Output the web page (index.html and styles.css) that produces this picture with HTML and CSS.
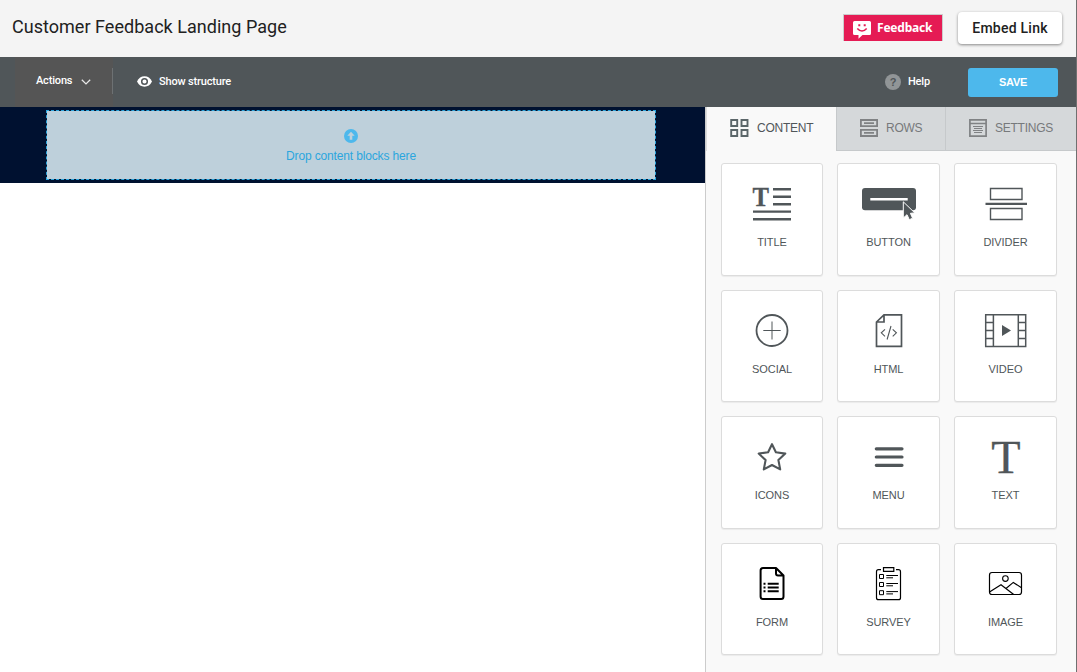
FILE: index.html
```html
<!DOCTYPE html>
<html lang="en">
<head>
<meta charset="utf-8">
<title>Customer Feedback Landing Page</title>
<link rel="stylesheet" href="styles.css">
</head>
<body>
<div class="app">
  <header class="header">
    <h1 class="page-title">Customer Feedback Landing Page</h1>
    <button class="feedback">
      <svg width="18" height="18" viewBox="0 0 18 18"><path d="M1.500 0h15Q18 0 18 1.500v11Q18 14 16.500 14H9.500L5.500 17.800V14h-4Q0 14 0 12.500v-11Q0 0 1.500 0z" fill="#fff"/><path d="M5.300 3.200h2v2h-2zM10.700 3.200h2v2h-2z" fill="#e51b54"/><path d="M4.300 7.500Q9 12.600 13.700 7.500" fill="none" stroke="#e51b54" stroke-width="1.600"/></svg>
      <span>Feedback</span>
    </button>
    <button class="embed">Embed Link</button>
  </header>
  <nav class="toolbar">
    <div class="actions"><span>Actions</span>
      <svg width="10" height="6" viewBox="0 0 10 6"><path d="M.8.8L5 4.900 9.200.8" fill="none" stroke="#e8e8e8" stroke-width="1.300"/></svg>
    </div>
    <div class="structure">
      <svg width="15" height="11" viewBox="0 0 15 11"><path d="M0 5.500Q2.500.3 7.500.3T15 5.500Q12.500 10.700 7.500 10.700T0 5.500z" fill="#fff"/><circle cx="7.500" cy="5.500" r="2.800" fill="#fff" stroke="#505659" stroke-width="1.500"/></svg>
      <span>Show structure</span>
    </div>
    <div class="help"><span class="help-mark">?</span><span>Help</span></div>
    <button class="save">SAVE</button>
  </nav>
  <div class="workspace">
    <main class="canvas">
      <section class="stage-row">
        <div class="dropzone">
          <svg width="14" height="14" viewBox="0 0 14 14"><circle cx="7" cy="7" r="7" fill="#4db8ec"/><path d="M7 2.800l3.700 3.900H8.300v4H5.700v-4H3.300z" fill="#bed0db"/></svg>
          <span>Drop content blocks here</span>
        </div>
      </section>
    </main>
    <aside class="panel">
      <div class="tabs">
        <div class="tab tab-content">
          <svg width="19" height="18" viewBox="0 0 19 18" fill="none" stroke="#5b6669" stroke-width="1.900"><path d="M1.200 1h6v6h-6zM11.500 1h6v6h-6zM1.200 11h6v6h-6zM11.500 11h6v6h-6z"/></svg>
          <span>CONTENT</span>
        </div>
        <div class="tab tab-rows">
          <svg width="18" height="18" viewBox="0 0 18 18" fill="none" stroke="#808284" stroke-width="1.800"><path d="M.9 1h16.200v6.200H.9zM.9 10.800h16.200V17H.9zM4 4.100h10M4 13.900h10"/></svg>
          <span>ROWS</span>
        </div>
        <div class="tab tab-settings">
          <svg width="18" height="18" viewBox="0 0 18 18" fill="none" stroke="#808284"><path d="M.9.9h16.200v16.200H.9zM1 4.500h16" stroke-width="1.700"/><path d="M4 7.500h10M5 9.500h8M4 11.500h10M5 13.500h8"/></svg>
          <span>SETTINGS</span>
        </div>
      </div>
      <div class="tiles">
        <div class="tile"><svg class="icon" viewBox="0 0 60 40"><text class="serif-t" x="10.500" y="23" font-size="27" font-weight="bold" textLength="16.500" lengthAdjust="spacingAndGlyphs">T</text><path d="M31 6.200h18M31 13.800h18M31 21.200h18M11 28.600h38M11 36.200h38" stroke-width="2.400"/></svg><span>TITLE</span></div>
        <div class="tile"><svg class="icon" viewBox="0 0 60 40"><rect x="4" y="5" width="54" height="22.300" rx="3" fill="#505659" stroke="none"/><path d="M12.300 16.300h37.400" stroke="#fff" stroke-width="2.400"/><path d="M45.300 18.800V35l3.700-3.300 2.300 5 3.300-1.500-2.200-4.900 4.400-.4z" fill="#505659" stroke="#fff" stroke-width="1"/></svg><span>BUTTON</span></div>
        <div class="tile"><svg class="icon" viewBox="0 0 60 40"><path d="M15.500 5.500h31.500v11H15.500zM15.500 25.500h31.500v11H15.500z" stroke-width="1.400"/><path d="M10.500 20.900h41.500" stroke-width="2.400"/></svg><span>DIVIDER</span></div>
        <div class="tile"><svg class="icon" viewBox="0 0 60 40"><circle cx="30" cy="20.500" r="15.500" stroke-width="1.800"/><path d="M21.300 20.500h17.400M30 11.500v18" stroke-width="1"/></svg><span>SOCIAL</span></div>
        <div class="tile"><svg class="icon" viewBox="0 0 60 40"><path d="M26 4.800h17.500v31.500h-25V12zM26 4.800V12h-7.500" stroke-width="1.700"/><path d="M27 19.300l-3.700 3.500 3.700 3.500M34.700 19.300l3.700 3.500-3.700 3.500M33 16l-3.900 13.500" stroke-width="1.100"/></svg><span>HTML</span></div>
        <div class="tile"><svg class="icon" viewBox="0 0 60 40"><path d="M10.700 4.700h40v31.700h-40zM18.400 4.700v31.700M43.300 4.700v31.700M10.700 12.500h7.700M10.700 20.500h7.700M10.700 28.500h7.700M43.300 12.500h7.400M43.300 20.500h7.400M43.300 28.500h7.400" stroke-width="1.500"/><path d="M27 15v11l9-5.500z" fill="#505659" stroke="none"/></svg><span>VIDEO</span></div>
        <div class="tile"><svg class="icon" viewBox="0 0 60 40"><path d="M30 8.200l3.900 8 9.400 1.400-6.900 6.500 1.800 9.300L30 29l-8.200 4.400 1.800-9.300-6.900-6.500 9.400-1.400z" stroke-width="2.100" stroke-linejoin="round"/></svg><span>ICONS</span></div>
        <div class="tile"><svg class="icon" viewBox="0 0 60 40"><path d="M18.300 12.800h25.700M18.300 21h25.700M18.300 29.300h25.700" stroke-width="3.200" stroke-linecap="round"/></svg><span>MENU</span></div>
        <div class="tile"><svg class="icon" viewBox="0 0 60 40"><text class="serif-t" x="16.300" y="36.500" font-size="47" textLength="29.300" lengthAdjust="spacingAndGlyphs">T</text></svg><span>TEXT</span></div>
        <div class="tile"><svg class="icon icon-dark" viewBox="0 0 60 40"><path d="M34 5H21Q18.600 5 18.600 7.500v26Q18.600 36 21 36h18.200Q41.500 36 41.500 33.500V12.500zM34 5v5.500Q34 12.500 36 12.500h5.500" stroke-width="2" stroke-linejoin="round"/><path d="M25.700 20.700h11M25.700 24.500h11M25.700 28.300h11M21.500 20.700h2M21.500 24.500h2M21.500 28.300h2" stroke-width="1.900"/></svg><span>FORM</span></div>
        <div class="tile"><svg class="icon icon-dark" viewBox="0 0 60 40"><path d="M23 6.700h-2.500q-2 0-2 2v26q0 2 2 2h20q2 0 2-2v-26q0-2-2-2H38M25.500 4.600h10.300v3.800H25.500z" stroke-width="1.200"/><path d="M21.500 11.500h4v4h-4zM21.500 19.500h4v4h-4zM21.500 27.700h4v4h-4zM28.300 12.500H40M28.300 14.800H35M28.300 20.500H40M28.300 22.800H35M28.300 28.600H40M28.300 30.900H35"/></svg><span>SURVEY</span></div>
        <div class="tile"><svg class="icon icon-dark" viewBox="0 0 60 40"><rect x="14.500" y="9.500" width="32" height="22" rx="2.500" stroke-width="1.200"/><circle cx="30.400" cy="15.600" r="2.800" stroke-width="1.100"/><path d="M14.500 29L26 21.800 38.700 31.500M30.700 25.700l7.600-6.300 8.200 5.300" stroke-width="1.200"/></svg><span>IMAGE</span></div>
      </div>
    </aside>
  </div>
</div>
</body>
</html>
```
FILE: styles.css
```css
* { box-sizing: border-box; }
body {
  margin: 0;
  font-family: "Liberation Sans", Arial, sans-serif;
  color: #505659;
}
button { border: 0; padding: 0; font: inherit; }
svg { display: block; flex: none; }
.app {
  width: 1077px;
  height: 672px;
  display: flex;
  flex-direction: column;
  overflow: hidden;
  border-right: 1px solid #707070;
}
.header {
  height: 57px;
  flex: none;
  display: flex;
  align-items: center;
  padding: 0 14px 1px 12px;
  background: #f4f4f4;
}
.page-title {
  margin: 0 auto 2px 0;
  font: 400 18px/24px Roboto, sans-serif;
  letter-spacing: .03px;
  color: #212121;
  white-space: nowrap;
}
.feedback {
  width: 100px;
  height: 27px;
  display: flex;
  align-items: center;
  gap: 6px;
  padding-left: 9px;
  margin: 0 15px 1px 0;
  border: 1px solid #ccc;
  border-bottom: 0;
  background: #e51b54;
  color: #fff;
  font: 700 12px/20px "Noto Sans", sans-serif;
  letter-spacing: -.2px;
}
.feedback svg { margin-top: 3px; }
.embed {
  width: 104px;
  height: 32px;
  border-radius: 4px;
  background: #fff;
  color: #212121;
  font: 500 14px/32px Roboto, sans-serif;
  letter-spacing: .25px;
  box-shadow: 0 1px 3px rgba(0, 0, 0, .45);
}
.toolbar {
  height: 50px;
  flex: none;
  display: flex;
  align-items: center;
  padding: 0 18px 0 15px;
  background: #505659;
  color: #fff;
  font: 500 11px/16px Roboto, sans-serif;
  letter-spacing: -.17px;
}
.actions {
  width: 98px;
  height: 50px;
  display: flex;
  align-items: center;
  gap: 9px;
  padding: 0 0 3px 21px;
  background: linear-gradient(#6d7173, #6d7173) right 11px / 1px 26px no-repeat, #555;
}
.actions svg { margin-top: 3px; }
.structure {
  display: flex;
  align-items: center;
  gap: 7px;
  margin: 0 auto 1px 24px;
}
.help {
  display: flex;
  align-items: center;
  gap: 7px;
  margin-right: 38px;
}
.help-mark {
  width: 16px;
  height: 16px;
  border-radius: 50%;
  background: #919597;
  color: #505659;
  font: 700 11px/16px "Liberation Sans", sans-serif;
  text-align: center;
}
.save {
  width: 90px;
  height: 29px;
  border-radius: 3px;
  background: #4db8ec;
  color: #fff;
  font: 700 11px/29px "Liberation Sans", sans-serif;
  letter-spacing: -.3px;
}
.workspace { flex: 1; display: flex; }
.canvas { width: 705px; background: #fff; }
.stage-row { height: 76px; padding: 3px 49px 3px 46px; background: #001130; }
.dropzone {
  height: 70px;
  display: flex;
  flex-direction: column;
  align-items: center;
  gap: 5px;
  padding-top: 18px;
  border: 1px dashed #2ba6de;
  background: #bed0db;
  background-clip: padding-box;
  color: #2ba6de;
  font-size: 12px;
  line-height: 16px;
  letter-spacing: -.15px;
}
.panel { width: 371px; border-left: 1px solid #ccc; background: #f9f9f9; }
.tabs { display: flex; height: 44px; font-size: 12px; letter-spacing: -.25px; }
.tab {
  display: flex;
  align-items: center;
  gap: 8px;
  padding-bottom: 2px;
  white-space: nowrap;
}
.tab-content { width: 130px; padding-left: 23px; border-left: 1px solid #ddd; }
.tab-rows, .tab-settings {
  border: 1px solid #c6c9cb;
  border-width: 0 0 1px 1px;
  background: #d5d8da;
  color: #77797b;
}
.tab-rows { width: 109px; padding-left: 23px; }
.tab-settings { width: 131px; padding-left: 23px; }
.tiles {
  display: grid;
  grid-template-columns: 102px 103px 103px;
  grid-template-rows: 113px 112px 113px 112px;
  gap: 14px;
  padding: 12px 0 0 15px;
}
.tile {
  border: 1px solid #dcdcdc;
  border-radius: 3px;
  background: #fff;
  box-shadow: 0 1px 1px rgba(0, 0, 0, .06);
  padding-top: 19px;
  font-size: 11px;
  line-height: 16px;
  letter-spacing: -.08px;
  text-align: center;
}
.tile span { display: block; }
.icon {
  width: 60px;
  height: 40px;
  margin: 0 0 11px 20px;
  overflow: visible;
  fill: none;
  stroke: #505659;
}
.icon-dark { stroke: #000; }
.serif-t {
  font-family: "Liberation Serif", serif;
  letter-spacing: 0;
  fill: #505659;
  stroke-width: .3px;
}
```
